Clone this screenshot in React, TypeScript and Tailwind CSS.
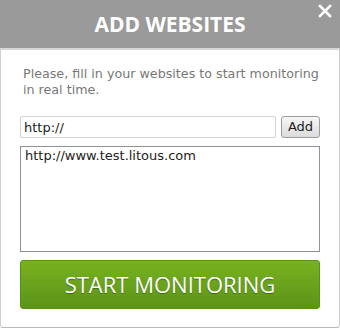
export default function App() {
  return (
    <div className="h-[328px] w-[340px] bg-white">
      <div className="relative flex h-[48px] items-center justify-center bg-[#9a9a9a] font-['Open_Sans',sans-serif] text-[21px] font-bold text-white">
        <span className="mt-[1px]">ADD WEBSITES</span>
        <button className="absolute right-[8px] top-[1px] text-[20px] leading-none font-bold text-white">
          <svg width="14" height="14" viewBox="0 0 14 14" className="mt-[3px]">
            <path d="M2 2 L12 12 M12 2 L2 12" stroke="white" strokeWidth="2.6" strokeLinecap="square" />
          </svg>
        </button>
      </div>
      <div className="flex h-[280px] flex-col rounded-b-[3px] border-x border-b border-t-2 border-x-[#cfcfcf] border-b-[#b8b8b8] border-t-[#d6d6d6] px-[19px] pt-[16px] font-['DejaVu_Sans',sans-serif]">
        <p className="mr-[-8px] pl-[3px] text-[12.7px] leading-[16px] text-[#777]">
          Please, fill in your websites to start monitoring in real time.
        </p>
        <div className="mt-[18px] flex h-[22px] gap-[5px]">
          <input
            defaultValue="http://"
            className="h-full w-[256px] rounded-[2px] border border-[#d4d4d4] px-[3px] text-[13px] text-[#222] outline-none"
          />
          <button className="h-full flex-1 rounded-[3px] border border-[#9c9c9c] bg-gradient-to-b from-[#f6f6f6] to-[#dcdcdc] text-[13px] text-[#222]">
            Add
          </button>
        </div>
        <textarea
          defaultValue="http://www.test.litous.com"
          className="mt-[8px] h-[106px] resize-none border border-[#8e9399] px-[4px] py-[1px] text-[13px] leading-[16px] text-[#222] outline-none"
        />
        <button className="mt-[8px] h-[49px] rounded-[3px] border border-[#5a8f18] bg-gradient-to-b from-[#78b21f] to-[#5c9419] font-['Open_Sans',sans-serif] text-[22px] text-white [text-shadow:0_1px_1px_rgba(0,0,0,0.35)]">
          START MONITORING
        </button>
      </div>
    </div>
  );
}
